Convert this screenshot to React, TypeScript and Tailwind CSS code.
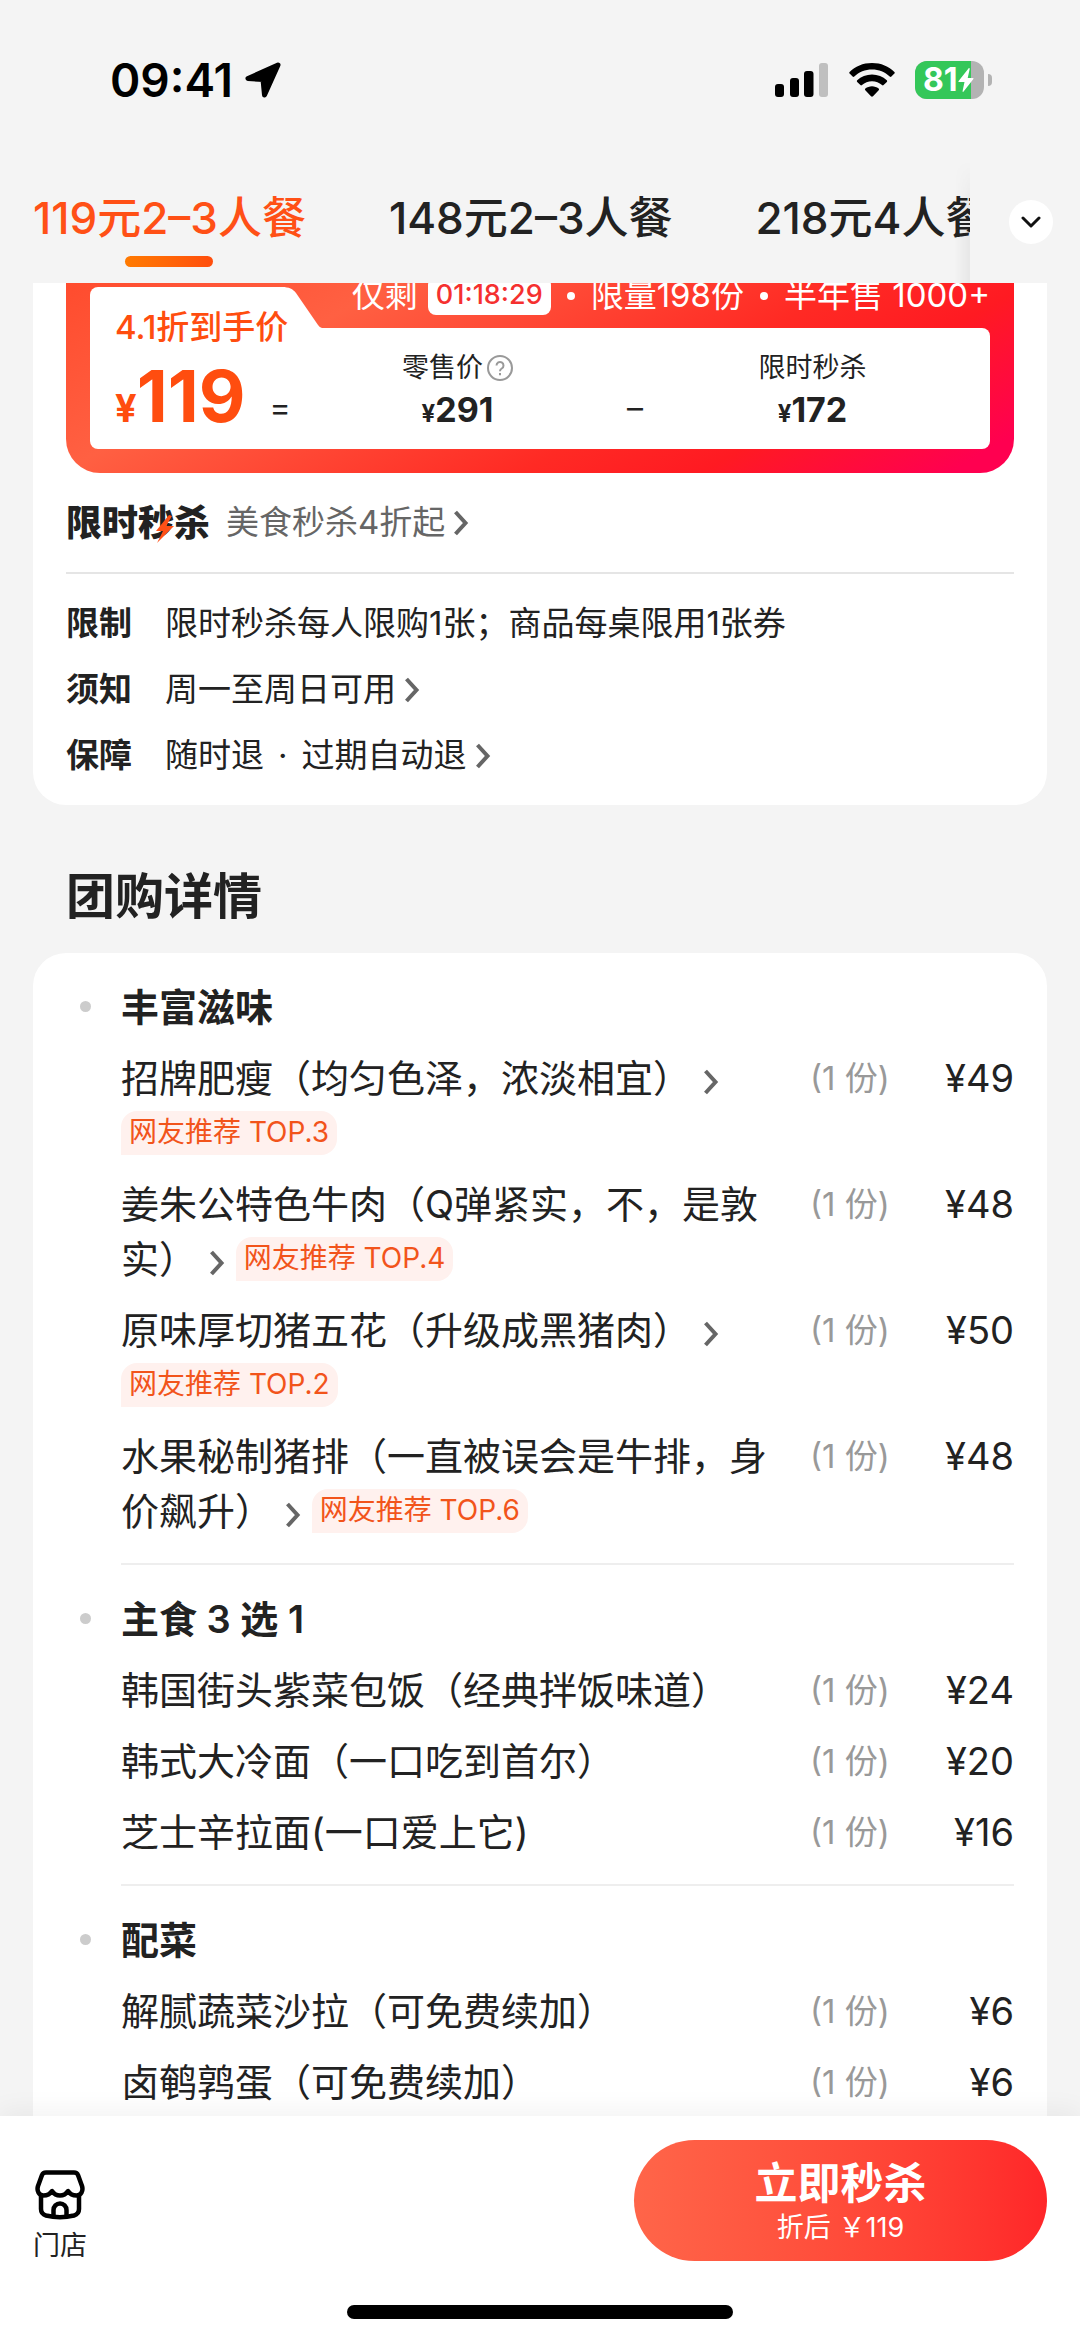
import type { ReactNode } from 'react'

interface Dish {
  name: string
  price: number
  top?: number
}

interface Group {
  title: string
  dishes: Dish[]
}

const TABS = ['119元2–3人餐', '148元2–3人餐', '218元4人餐']

const GROUPS: Group[] = [
  {
    title: '丰富滋味',
    dishes: [
      { name: '招牌肥瘦（均匀色泽，浓淡相宜）', price: 49, top: 3 },
      { name: '姜朱公特色牛肉（Q弹紧实，不，是敦实）', price: 48, top: 4 },
      { name: '原味厚切猪五花（升级成黑猪肉）', price: 50, top: 2 },
      { name: '水果秘制猪排（一直被误会是牛排，身价飙升）', price: 48, top: 6 },
    ],
  },
  {
    title: '主食 3 选 1',
    dishes: [
      { name: '韩国街头紫菜包饭（经典拌饭味道）', price: 24 },
      { name: '韩式大冷面（一口吃到首尔）', price: 20 },
      { name: '芝士辛拉面(一口爱上它)', price: 16 },
    ],
  },
  {
    title: '配菜',
    dishes: [
      { name: '解腻蔬菜沙拉（可免费续加）', price: 6 },
      { name: '卤鹌鹑蛋（可免费续加）', price: 6 },
    ],
  },
]

function Chevron({ className = '' }: { className?: string }) {
  return (
    <svg viewBox="0 0 16 26" className={`inline-block h-[26px] w-4 text-[#666] ${className}`} fill="none" stroke="currentColor" strokeWidth="4">
      <path d="M2.500 2 12.500 13 2.500 24" />
    </svg>
  )
}

function StatusBar() {
  return (
    <div className="flex h-40 items-center justify-between pr-[88px] pl-[110px]">
      <div className="flex items-center gap-3">
        <span className="text-[46px] leading-none font-semibold text-black">09:41</span>
        <svg viewBox="0 0 36 36" className="h-9 w-9" stroke="#000" strokeWidth="5" strokeLinejoin="round">
          <path d="M33 3 3 16.500 18 17.500 19.500 33Z" />
        </svg>
      </div>
      <div className="flex items-center gap-5">
        <svg viewBox="0 0 54 34" className="h-[34px] w-[54px]">
          <rect x="0" y="21" width="9" height="13" rx="3" />
          <rect x="15" y="15" width="9" height="19" rx="3" />
          <rect x="29" y="8" width="9.500" height="26" rx="3" />
          <rect x="44" y="0" width="9" height="34" rx="3" fill="#bfbfbf" />
        </svg>
        <svg viewBox="0 0 46 34" className="h-[34px] w-[46px]">
          <path d="M23 0C14 0 6 3.400 .6 8.900c-.5.5-.5 1.200 0 1.700l3 3c.5.5 1.200.5 1.700 0C9.900 9 16.200 6.600 23 6.600S36.100 9 40.700 13.600c.5.5 1.200.5 1.700 0l3-3c.5-.5.5-1.200 0-1.700C40 3.400 32 0 23 0Z" />
          <path d="M23 11.600c-5.700 0-10.900 2.100-14.800 5.600-.5.5-.5 1.200 0 1.700l3.200 3.200c.4.400 1.100.4 1.600 0 2.700-2.300 6.200-3.800 10-3.800s7.300 1.500 10 3.800c.5.4 1.200.4 1.600 0l3.200-3.200c.5-.5.5-1.200 0-1.700-3.900-3.500-9.100-5.600-14.800-5.600Z" />
          <path d="M23 23.300c-2.500 0-4.800.9-6.600 2.300-.5.4-.6 1.200-.1 1.700l5.700 6c.6.6 1.400.6 2 0l5.700-6c.5-.5.4-1.300-.1-1.700-1.800-1.400-4.100-2.300-6.600-2.300Z" />
        </svg>
        <div className="flex items-center gap-1">
          <div className="relative flex h-[38px] w-[69px] items-center overflow-hidden rounded-xl bg-[#b3b3b3]">
            <div className="absolute inset-y-0 left-0 w-14 bg-[#34c759]" />
            <span className="relative pl-2 text-[32px] leading-none font-bold text-white">81</span>
            <svg viewBox="0 0 16 24" className="relative h-6 w-4" fill="#fff">
              <path d="M10.500.4.600 13c-.4.5 0 1 .5 1h5.400L4.600 23c-.2.9.5 1.200 1 .6L15.400 11c.4-.5.1-1-.5-1H9.700L11.700 1c.2-.8-.7-1.200-1.200-.6Z" />
            </svg>
          </div>
          <div className="h-3 w-1 rounded-r-full bg-[#b3b3b3]" />
        </div>
      </div>
    </div>
  )
}

function PackageTabs() {
  return (
    <nav className="flex h-[123px]">
      <div className="flex flex-1 gap-[83px] overflow-hidden pl-[33px]">
        {TABS.map((tab, i) => (
          <button key={tab} className="flex shrink-0 flex-col items-center pt-7">
            <span className={`text-[44px] leading-[60px] font-medium whitespace-nowrap ${i === 0 ? 'text-[#ff5016]' : 'text-[#222]'}`}>
              {tab}
            </span>
            {i === 0 && <span className="mt-2 h-[11px] w-[88px] rounded-full bg-linear-to-r from-[#ff7a00] to-[#ff4d0d]" />}
          </button>
        ))}
      </div>
      <div className="relative flex w-[110px] shrink-0 justify-center pt-10 pl-3">
        <div className="absolute inset-y-0 -left-4 w-4 bg-linear-to-r from-transparent to-black/5 [mask-image:linear-gradient(to_bottom,transparent,black_50%)]" />
        <button aria-label="更多套餐" className="flex h-11 w-11 items-center justify-center rounded-full bg-white">
          <svg viewBox="0 0 20 12" className="h-3 w-5" fill="none" stroke="#111" strokeWidth="3" strokeLinecap="round" strokeLinejoin="round">
            <path d="M2 2 10 10 18 2" />
          </svg>
        </button>
      </div>
    </nav>
  )
}

function PriceCell({ label, value, help }: { label: string; value: number; help?: boolean }) {
  return (
    <div className="flex flex-1 flex-col items-center pt-[22px] text-[#222]">
      <div className="flex items-center gap-1 text-[27px] leading-9">
        {label}
        {help && (
          <svg viewBox="0 0 26 26" className="h-[26px] w-[26px]" fill="none" stroke="#999" strokeWidth="2">
            <circle cx="13" cy="13" r="12" />
            <path d="M9.500 10.500a3.500 3.500 0 1 1 5.300 3c-1.200.7-1.800 1.400-1.800 2.800" />
            <path d="M13 18v2.200" />
          </svg>
        )}
      </div>
      <div className="mt-1 leading-10 font-bold">
        <span className="text-2xl">¥</span>
        <span className="text-[34px]">{value}</span>
      </div>
    </div>
  )
}

function PriceBanner() {
  return (
    <div className="rounded-b-[34px] bg-[linear-gradient(150deg,#ff4a2c_0%,#ff6042_27%,#ff2a24_62%,#ff1a22_76%,#ff0050_95%)] px-6 pb-6">
      <div className="flex h-[61px]">
        <div className="mt-5 w-48 rounded-tl-lg bg-white" />
        <svg viewBox="0 0 40 41" className="mt-5 h-[41px] w-10" fill="#fff">
          <path d="M0 0C7 0 11 2 14 6L36 38Q38 41 40 41H0Z" />
        </svg>
        <div className="flex flex-1 items-center justify-end gap-[10px] pb-1 text-[33px] whitespace-nowrap text-white">
          <span>仅剩</span>
          <span className="flex h-[38px] items-center rounded-lg bg-white px-2 text-[27px] font-medium text-[#f5302f]">01:18:29</span>
          <span className="mx-1.5 h-2 w-2 rounded-full bg-white" />
          <span>限量198份</span>
          <span className="mx-1.5 h-2 w-2 rounded-full bg-white" />
          <span>半年售 1000+</span>
        </div>
      </div>
      <div className="flex h-[121px] rounded-tr-lg rounded-b-lg bg-white pr-3 pl-[25px]">
        <div className="relative -mt-[21px] w-[153px] text-[#ff4d0f]">
          <div className="text-[33px] leading-10 font-medium whitespace-nowrap">4.1折到手价</div>
          <div className="leading-[98px] font-bold whitespace-nowrap">
            <span className="text-[38px]">¥</span>
            <span className="text-[72px]">119</span>
          </div>
        </div>
        <span className="w-6 pt-[60px] text-center text-[32px] leading-10 text-[#222]">=</span>
        <PriceCell label="零售价" value={291} help />
        <span className="w-6 pt-[60px] text-center text-[32px] leading-10 text-[#222]">–</span>
        <PriceCell label="限时秒杀" value={172} />
      </div>
    </div>
  )
}

function InfoRow({ label, children }: { label: string; children: ReactNode }) {
  return (
    <div className="flex h-[66px] items-center text-[33px]">
      <dt className="w-[99px] font-semibold">{label}</dt>
      <dd>{children}</dd>
    </div>
  )
}

function DealCard() {
  return (
    <section className="-mt-4 rounded-b-[33px] bg-white px-[33px] pb-4">
      <PriceBanner />
      <a href="#seckill" className="flex h-[99px] items-center">
        <span className="relative text-4xl font-black">
          限时秒杀
          <svg viewBox="0 0 18 28" className="absolute top-3 left-[90px] h-7 w-[18px]" fill="#ff5016">
            <path d="M13 0 0 16h7L1 28 18 11h-8L16 1Z" />
          </svg>
        </span>
        <span className="ml-4 text-[33px] text-[#666]">美食秒杀4折起</span>
        <Chevron className="ml-2" />
      </a>
      <dl className="border-t-2 border-[#e5e5e5] pt-[17px]">
        <InfoRow label="限制">限时秒杀每人限购1张；商品每桌限用1张券</InfoRow>
        <InfoRow label="须知">
          <button className="flex items-center gap-2">周一至周日可用<Chevron /></button>
        </InfoRow>
        <InfoRow label="保障">
          <button className="flex items-center gap-2">
            <span>随时退<span className="mx-[14px]">·</span>过期自动退</span>
            <Chevron />
          </button>
        </InfoRow>
      </dl>
    </section>
  )
}

function DishRow({ dish }: { dish: Dish }) {
  return (
    <li className="flex text-[38px] leading-[55px]">
      <div className="flex-1">
        {dish.name}
        {dish.top && (
          <>
            <Chevron className="ml-3" />{' '}
            <span className="inline-block h-11 rounded-2xl rounded-bl-none bg-[#fff1ee] px-2 align-[5px] text-[28px] leading-[42px] text-[#f2541b]">
              网友推荐 TOP.{dish.top}
            </span>
          </>
        )}
      </div>
      <span className="ml-8 w-[82px] shrink-0 text-[33px] whitespace-nowrap text-[#999]">(1 份)</span>
      <span className="w-[122px] shrink-0 text-right">¥{dish.price}</span>
    </li>
  )
}

function DishGroup({ group }: { group: Group }) {
  return (
    <section className="flex">
      <span className="mx-[14px] mt-[48px] h-[11px] w-[11px] shrink-0 rounded-full bg-[#ccc]" />
      <div className="ml-4 flex-1 border-b-2 border-[#eee] pt-[27px] pb-6">
        <h3 className="text-[38px] leading-[55px] font-semibold">{group.title}</h3>
        <ul className="mt-4 flex flex-col gap-4">
          {group.dishes.map(dish => <DishRow key={dish.name} dish={dish} />)}
        </ul>
      </div>
    </section>
  )
}

function BuyBar() {
  return (
    <footer className="relative shrink-0 bg-white shadow-[0_-6px_24px_rgba(0,0,0,0.05)]">
      <div className="flex items-start justify-between px-[33px] pt-6">
        <button className="flex flex-col items-center pt-[30px] text-[27px] leading-10 text-[#222]">
          <svg viewBox="0 0 50 50" className="mb-1.5 h-[50px] w-[50px]" fill="none" stroke="#000" strokeWidth="4.500" strokeLinejoin="round" strokeLinecap="round">
            <path d="M11 2.500H39Q42 2.500 43 5L47 16C48.500 21 46 25.500 41.500 25.500 37.500 25.500 35 24 33 21 31 24 28.500 25.500 25 25.500S19 24 17 21C15 24 12.500 25.500 8.500 25.500 4 25.500 1.500 21 3 16L7 5Q8 2.500 11 2.500Z" />
            <path d="M6 26V39Q6 44 11 45.500 25 49 39 45.500 44 44 44 39V26" />
            <path d="M18.500 46V40a6.500 6.500 0 0 1 13 0V46" />
          </svg>
          门店
        </button>
        <button className="flex h-[121px] w-[413px] flex-col items-center justify-center rounded-full bg-linear-to-r from-[#ff6549] to-[#ff2629] text-white">
          <span className="text-[43px] leading-[54px] font-semibold">立即秒杀</span>
          <span className="text-[27px] leading-9">折后 ￥119</span>
        </button>
      </div>
      <div className="mx-auto mt-[39px] mb-[22px] h-[14px] w-[386px] rounded-full bg-black" />
    </footer>
  )
}

export default function App() {
  return (
    <div className="flex h-screen flex-col overflow-hidden bg-[#f4f4f4] font-[Inter,'Noto_Sans_CJK_SC',sans-serif] text-[#222]">
      <header className="shrink-0">
        <StatusBar />
        <PackageTabs />
      </header>
      <main className="min-h-0 flex-1 overflow-hidden px-[33px]">
        <DealCard />
        <h2 className="pt-[60px] pl-[33px] text-[49px] leading-[64px] font-semibold">团购详情</h2>
        <div className="mt-6 rounded-[33px] bg-white px-[33px] pb-12">
          {GROUPS.map(group => <DishGroup key={group.title} group={group} />)}
        </div>
      </main>
      <BuyBar />
    </div>
  )
}
